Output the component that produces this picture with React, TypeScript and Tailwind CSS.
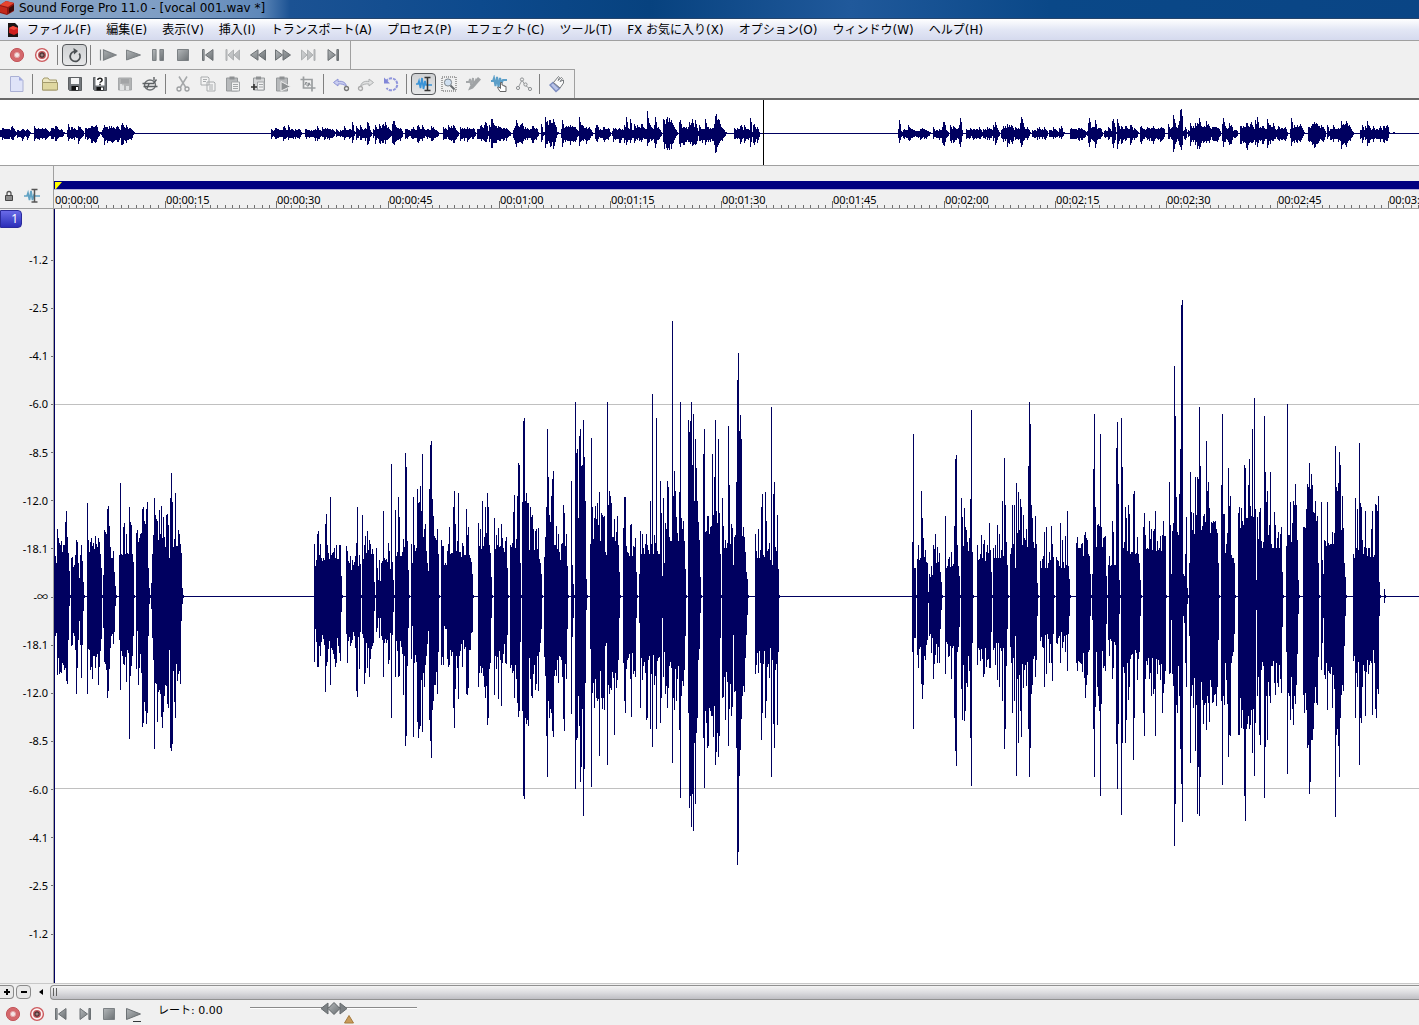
import type { ReactNode } from 'react';

type Phrase = [from: number, to: number, up: number, down: number, peaks: number[]];

// Each phrase: first column, last column, body height above and below zero,
// then its peaks as column, up, down.
const phrases: Phrase[] = [
  [55, 69, 46, 64, [55, 40, 40, 56, 33, 37, 57, 67, 79, 58, 58, 62, 65, 74, 72, 66, 85, 85, 68, 43, 44, 69, 25, 10]],
  [71, 83, 32, 40, [71, 38, 50, 76, 56, 98, 77, 54, 72, 79, 18, 25, 81, 51, 82, 83, 14, 15]],
  [87, 101, 46, 54, [87, 93, 98, 88, 56, 53, 90, 54, 74, 92, 50, 83, 93, 53, 60, 98, 58, 89, 101, 28, 43]],
  [103, 115, 42, 45, [103, 21, 32, 104, 66, 66, 105, 64, 68, 106, 62, 74, 107, 87, 102, 108, 90, 95, 109, 70, 73, 114, 24, 36, 115, 10, 10]],
  [119, 133, 46, 58, [119, 41, 44, 120, 113, 94, 123, 69, 68, 124, 73, 69, 126, 62, 86, 129, 89, 143, 130, 74, 80, 131, 71, 70, 133, 34, 40]],
  [136, 149, 50, 60, [137, 66, 35, 138, 54, 89, 140, 62, 58, 142, 87, 131, 143, 89, 127, 144, 75, 106, 145, 72, 115, 146, 87, 128, 147, 94, 117, 148, 28, 40, 149, 8, 8]],
  [151, 182, 54, 88, [151, 13, 13, 152, 42, 42, 153, 61, 64, 154, 98, 153, 155, 81, 87, 156, 77, 88, 157, 75, 126, 159, 86, 94, 161, 90, 121, 162, 58, 132, 163, 79, 116, 166, 81, 90, 167, 82, 108, 169, 38, 54, 170, 98, 152, 171, 123, 155, 172, 94, 148, 175, 103, 122, 176, 50, 68, 178, 66, 78, 179, 62, 75, 181, 43, 25, 182, 8, 8]],
  [314, 341, 39, 46, [314, 52, 66, 315, 30, 33, 317, 62, 71, 318, 65, 71, 325, 72, 96, 326, 82, 70, 330, 99, 89, 335, 38, 71, 339, 51, 57, 341, 20, 16]],
  [346, 360, 32, 38, [346, 50, 38, 347, 45, 67, 351, 26, 47, 356, 53, 95, 357, 89, 101, 359, 41, 73, 360, 32, 36]],
  [362, 374, 40, 46, [362, 81, 38, 364, 51, 88, 365, 60, 77, 367, 65, 72, 369, 56, 81, 372, 47, 50, 374, 14, 15]],
  [376, 393, 30, 35, [376, 48, 36, 378, 16, 22, 380, 15, 22, 383, 85, 81, 388, 53, 68, 389, 45, 64, 391, 132, 122, 392, 34, 39, 393, 16, 16]],
  [395, 408, 44, 52, [395, 86, 81, 398, 99, 81, 399, 79, 80, 403, 57, 99, 405, 143, 150, 406, 129, 140, 407, 55, 70, 408, 26, 32]],
  [411, 438, 50, 68, [411, 52, 63, 412, 33, 30, 413, 99, 141, 417, 107, 126, 418, 93, 142, 419, 94, 133, 420, 110, 130, 421, 85, 84, 422, 142, 136, 425, 72, 69, 427, 33, 48, 428, 25, 35, 429, 107, 124, 430, 151, 145, 431, 155, 162, 432, 97, 114, 433, 80, 105, 437, 67, 98, 438, 42, 56]],
  [441, 472, 38, 48, [441, 50, 62, 442, 45, 55, 444, 28, 27, 445, 30, 30, 446, 28, 30, 449, 62, 62, 453, 80, 101, 454, 95, 119, 455, 65, 84, 458, 93, 93, 462, 48, 64, 463, 45, 40, 466, 78, 88, 467, 55, 89, 468, 62, 83, 471, 31, 33, 472, 20, 32]],
  [478, 491, 42, 62, [478, 66, 82, 480, 60, 63, 482, 86, 65, 485, 80, 92, 487, 93, 116, 488, 80, 110, 489, 46, 66, 491, 17, 20]],
  [494, 507, 40, 46, [494, 70, 89, 496, 55, 66, 498, 61, 93, 501, 65, 99, 502, 52, 60, 507, 25, 35]],
  [510, 520, 48, 68, [510, 46, 65, 513, 76, 68, 514, 91, 92, 517, 90, 96, 518, 120, 109, 519, 118, 104, 520, 30, 41]],
  [522, 541, 46, 62, [522, 85, 104, 523, 158, 180, 524, 160, 183, 525, 86, 110, 526, 93, 115, 527, 84, 112, 528, 84, 117, 530, 80, 75, 531, 71, 90, 532, 73, 92, 533, 60, 70, 539, 33, 50, 540, 30, 42, 541, 20, 30]],
  [544, 567, 46, 64, [544, 35, 55, 546, 80, 126, 547, 150, 163, 548, 107, 95, 549, 73, 110, 550, 67, 102, 551, 90, 105, 552, 105, 122, 553, 113, 127, 556, 63, 72, 559, 40, 54, 560, 32, 55, 561, 47, 58, 563, 82, 111, 564, 75, 122, 567, 27, 30]],
  [571, 573, 12, 20, [571, 104, 106, 572, 28, 37]],
  [575, 586, 75, 95, [575, 175, 174, 576, 129, 130, 577, 132, 128, 578, 70, 90, 579, 144, 117, 580, 150, 168, 581, 117, 154, 582, 118, 102, 583, 159, 198, 584, 125, 156, 585, 86, 78, 586, 15, 13]],
  [590, 619, 55, 74, [590, 47, 48, 591, 142, 172, 592, 80, 87, 595, 81, 75, 597, 84, 95, 599, 94, 144, 601, 75, 92, 602, 73, 102, 605, 40, 45, 606, 37, 42, 607, 175, 152, 608, 82, 80, 609, 95, 88, 610, 90, 83, 611, 84, 85, 614, 69, 125, 617, 72, 76, 618, 46, 58, 619, 22, 20]],
  [623, 636, 40, 58, [623, 61, 60, 624, 89, 95, 625, 89, 105, 630, 64, 75, 631, 65, 109, 636, 22, 20]],
  [639, 661, 42, 58, [639, 20, 24, 640, 59, 101, 646, 56, 112, 647, 46, 110, 650, 86, 120, 652, 182, 136, 656, 160, 120, 660, 104, 114, 661, 75, 92]],
  [662, 685, 55, 68, [662, 18, 20, 663, 88, 73, 664, 30, 50, 667, 104, 101, 668, 98, 83, 672, 248, 150, 673, 90, 92, 674, 113, 103, 675, 95, 66, 679, 94, 121, 680, 175, 182, 681, 70, 90, 682, 60, 77, 685, 24, 36]],
  [688, 700, 80, 120, [688, 159, 105, 689, 148, 191, 690, 158, 180, 691, 175, 208, 692, 118, 178, 693, 164, 212, 694, 86, 132, 695, 141, 187, 696, 115, 123, 697, 86, 110, 698, 67, 58, 699, 50, 48, 700, 17, 15]],
  [703, 720, 60, 103, [703, 128, 128, 704, 150, 173, 708, 72, 135, 712, 128, 108, 714, 107, 99, 715, 159, 152, 718, 141, 145, 720, 38, 38]],
  [722, 747, 48, 72, [722, 88, 92, 725, 50, 112, 728, 153, 135, 729, 100, 102, 731, 65, 108, 733, 28, 35, 736, 103, 137, 737, 195, 242, 738, 219, 231, 739, 149, 162, 740, 163, 139, 741, 141, 111, 742, 54, 90, 743, 62, 81, 745, 40, 56, 746, 22, 35, 747, 15, 17]],
  [755, 778, 38, 55, [755, 56, 70, 758, 60, 69, 761, 80, 130, 762, 92, 105, 765, 94, 110, 766, 68, 95, 770, 32, 47, 771, 170, 163, 772, 28, 58, 773, 92, 115, 774, 103, 137, 777, 73, 116, 778, 24, 50]],
  [912, 915, 28, 40, [912, 49, 50, 913, 146, 120, 914, 25, 38]],
  [917, 928, 34, 48, [918, 46, 65, 921, 95, 79, 922, 70, 93, 923, 52, 80, 927, 30, 40, 928, 4, 6]],
  [929, 932, 14, 28, [929, 20, 36, 931, 27, 51]],
  [933, 941, 32, 45, [933, 46, 75, 935, 56, 53, 937, 44, 60, 939, 39, 60, 940, 22, 30, 941, 13, 13]],
  [945, 959, 28, 44, [945, 72, 70, 951, 40, 75, 954, 63, 110, 955, 123, 140, 956, 127, 153, 957, 46, 50, 959, 18, 28]],
  [961, 972, 45, 58, [961, 88, 84, 962, 71, 112, 964, 79, 113, 965, 62, 104, 967, 49, 82, 970, 87, 128, 971, 168, 171, 972, 40, 42]],
  [977, 991, 33, 48, [977, 46, 62, 981, 55, 48, 983, 47, 73, 984, 50, 70, 987, 46, 58, 989, 66, 65, 991, 22, 32]],
  [993, 1007, 38, 48, [993, 43, 49, 997, 64, 76, 999, 56, 82, 1002, 86, 95, 1004, 124, 138, 1005, 82, 120, 1007, 28, 30]],
  [1010, 1037, 48, 58, [1010, 38, 46, 1012, 82, 105, 1014, 82, 95, 1015, 25, 36, 1016, 102, 162, 1018, 94, 132, 1020, 87, 104, 1021, 80, 127, 1023, 73, 83, 1028, 117, 120, 1029, 175, 163, 1030, 155, 137, 1031, 82, 88, 1032, 70, 80, 1035, 72, 73, 1037, 12, 18]],
  [1040, 1053, 28, 36, [1044, 58, 82, 1046, 62, 70, 1049, 40, 60, 1051, 63, 60, 1052, 47, 77, 1053, 35, 34]],
  [1056, 1069, 28, 35, [1060, 66, 60, 1062, 50, 47, 1065, 54, 50, 1067, 77, 68, 1069, 15, 18]],
  [1076, 1090, 40, 52, [1076, 48, 60, 1080, 43, 60, 1084, 55, 74, 1085, 58, 92, 1086, 52, 80, 1090, 20, 18]],
  [1092, 1106, 48, 56, [1092, 20, 22, 1093, 114, 120, 1094, 164, 163, 1095, 80, 100, 1098, 65, 90, 1099, 63, 104, 1100, 146, 180, 1101, 62, 97, 1103, 52, 65, 1106, 18, 25]],
  [1108, 1119, 30, 44, [1112, 68, 75, 1113, 58, 65, 1116, 133, 133, 1117, 157, 174, 1118, 101, 115, 1119, 14, 16]],
  [1121, 1140, 42, 56, [1121, 160, 197, 1122, 116, 132, 1125, 80, 132, 1126, 70, 112, 1128, 82, 94, 1129, 74, 82, 1133, 92, 148, 1134, 95, 110, 1139, 30, 50, 1140, 14, 18]],
  [1143, 1165, 45, 62, [1143, 62, 105, 1144, 75, 126, 1149, 68, 75, 1151, 60, 90, 1155, 77, 126, 1162, 55, 105, 1163, 68, 87, 1165, 54, 68]],
  [1169, 1171, 50, 55, [1169, 103, 70, 1170, 64, 69, 1171, 20, 22]],
  [1172, 1183, 58, 66, [1174, 207, 225, 1175, 162, 187, 1176, 89, 98, 1177, 58, 105, 1179, 92, 90, 1180, 132, 138, 1181, 262, 169, 1182, 267, 204, 1183, 20, 18]],
  [1184, 1187, 20, 26, [1185, 38, 60, 1186, 71, 82, 1187, 7, 7]],
  [1189, 1218, 62, 82, [1189, 30, 36, 1190, 112, 150, 1191, 76, 90, 1195, 107, 140, 1197, 107, 196, 1198, 105, 154, 1199, 170, 198, 1200, 117, 163, 1203, 72, 115, 1206, 140, 121, 1207, 95, 90, 1208, 103, 96, 1211, 67, 82, 1216, 60, 99, 1218, 30, 40]],
  [1221, 1234, 38, 56, [1221, 100, 95, 1222, 164, 170, 1223, 74, 90, 1224, 74, 98, 1227, 57, 97, 1228, 115, 145, 1229, 81, 125, 1230, 90, 126, 1234, 30, 34]],
  [1238, 1255, 64, 88, [1238, 75, 125, 1239, 80, 125, 1243, 64, 120, 1244, 118, 180, 1245, 115, 203, 1246, 70, 120, 1247, 70, 115, 1248, 100, 108, 1249, 123, 120, 1252, 150, 141, 1254, 178, 162, 1255, 78, 114]],
  [1256, 1282, 48, 62, [1256, 14, 13, 1257, 71, 90, 1259, 76, 125, 1260, 79, 134, 1264, 162, 182, 1265, 112, 136, 1266, 85, 90, 1267, 95, 130, 1270, 112, 96, 1274, 76, 78, 1277, 52, 78, 1282, 22, 28]],
  [1286, 1298, 50, 76, [1286, 45, 50, 1287, 173, 160, 1290, 85, 112, 1293, 86, 116, 1294, 82, 90, 1295, 101, 97, 1296, 82, 80, 1297, 50, 52, 1298, 14, 16]],
  [1303, 1318, 62, 80, [1304, 62, 105, 1307, 101, 137, 1308, 98, 134, 1309, 120, 178, 1310, 96, 168, 1311, 110, 130, 1312, 100, 130, 1313, 76, 120, 1315, 86, 82, 1318, 30, 55]],
  [1321, 1345, 50, 68, [1321, 85, 67, 1322, 32, 42, 1323, 20, 20, 1327, 85, 103, 1332, 58, 101, 1335, 135, 199, 1336, 98, 125, 1337, 95, 120, 1338, 102, 135, 1339, 130, 163, 1340, 118, 110, 1342, 90, 80, 1344, 30, 45, 1345, 17, 18]],
  [1353, 1379, 38, 56, [1355, 88, 110, 1357, 78, 82, 1359, 138, 152, 1360, 84, 110, 1361, 80, 114, 1365, 77, 108, 1371, 60, 60, 1372, 77, 107, 1375, 83, 102, 1376, 82, 110, 1377, 77, 84, 1378, 90, 88, 1379, 13, 18]],
  [1384, 1384, 5, 5, []],
];

const GUTTER = 54;
const PX_PER_15S = 111.2;
const LAST_LABEL = 180;

// The take gets louder from this column on.
const LOUD_FROM = 441;
const LOUD_GAIN = 1.11;

function buildColumns() {
  const cols: [number, number, number][] = [];
  let seed = 7;
  const rnd = () => {
    seed = (seed * 16807) % 2147483647;
    return seed / 2147483647;
  };
  for (const [from, to, up, down, peaks] of phrases) {
    const gain = from >= LOUD_FROM ? LOUD_GAIN : 1;
    for (let x = from; x <= to; x++) {
      const r = rnd();
      const wobble = gain * (0.9 + 0.45 * r * r);
      cols.push([x, Math.round(up * wobble), Math.round(down * (wobble + 0.05 + 0.2 * (rnd() - 0.5)))]);
    }
    for (let i = 0; i < peaks.length; i += 3) {
      cols[cols.length - 1 - (to - peaks[i])] = [
        peaks[i],
        Math.round(peaks[i + 1] * gain),
        Math.round(peaks[i + 2] * gain),
      ];
    }
    cols.push([to + 1, 1, 2]);
  }
  return cols;
}

const columns = buildColumns();

const wavePath = columns
  .map(([x, up, down]) => `M${x - GUTTER} ${-up}h1v${up + down}h-1z`)
  .join('');

const overviewPath = columns
  .map(([x, up, down]) => {
    const left = Math.round((x - GUTTER) * 1.048) - 1;
    const top = Math.round(up * 0.08);
    const bottom = Math.round(down * 0.07) + 1;
    return `M${left} ${-top}h1v${top + bottom}h-1zM${left + 1} ${-Math.round(top * 0.7)}h1v${Math.round((top + bottom) * 0.7)}h-1z`;
  })
  .join('');

const menus = [
  'ファイル(F)', '編集(E)', '表示(V)', '挿入(I)', 'トランスポート(A)', 'プロセス(P)',
  'エフェクト(C)', 'ツール(T)', 'FX お気に入り(X)', 'オプション(O)', 'ウィンドウ(W)', 'ヘルプ(H)',
];

const levels = [
  '-1.2', '-2.5', '-4.1', '-6.0', '-8.5', '-12.0', '-18.1', '-∞',
  '-18.1', '-12.0', '-8.5', '-6.0', '-4.1', '-2.5', '-1.2',
];

const timeLabel = (seconds: number) =>
  `00:${String(Math.floor(seconds / 60)).padStart(2, '0')}:${String(seconds % 60).padStart(2, '0')}`;

function Glyph({ children, faded }: { children: ReactNode; faded?: boolean }) {
  return (
    <svg width="18" height="18" viewBox="0 0 18 18" fill="none" opacity={faded ? 0.5 : 1} aria-hidden="true">
      {children}
    </svg>
  );
}

const steel = 'url(#steel)';

const icons: Record<string, ReactNode> = {
  record: (
    <>
      <circle cx="9" cy="9" r="6.6" fill="#d4686c" stroke="#c4575c" />
      <circle cx="9" cy="9" r="2.6" fill="#f3e4e4" stroke="#e3a5a7" />
    </>
  ),
  arm: (
    <>
      <circle cx="9" cy="9" r="6.4" fill="#fbf3f3" stroke="#cc5a5e" strokeWidth="1.4" />
      <circle cx="9" cy="9" r="3.3" fill="#4b3032" stroke="#c4575c" strokeWidth="1.3" />
      <circle cx="9" cy="9" r="1.5" fill="#9a7f80" />
    </>
  ),
  loop: (
    <>
      <path d="M13.2 7.5A5 5 0 1 1 8.5 5.5" stroke="#4a4f52" strokeWidth="1.7" />
      <path d="M7.5 2 12 5l-4 3.5z" fill="#4a4f52" />
    </>
  ),
  playAll: <path d="M1.5 3.5v11M4.5 4v10L17 9z" fill={steel} stroke="#7c8184" strokeWidth="1.2" />,
  play: <path d="M2.5 4v10L16.5 9z" fill={steel} stroke="#7c8184" />,
  pause: <path d="M3.5 3.5h3.6v11H3.5zM10.9 3.5h3.6v11h-3.6z" fill={steel} stroke="#7c8184" />,
  stop: <path d="M3.5 3.5h11v11h-11z" fill={steel} stroke="#7c8184" />,
  toStart: <path d="M3.5 3.5h1.6v11H3.5zM14 3.5v11L6.5 9z" fill={steel} stroke="#6c7174" />,
  prev: <path d="M2 3.5h1v11H2zM9.5 4v10L4 9zM15.5 4v10L10 9z" fill={steel} stroke="#6c7174" />,
  rewind: <path d="M9 3.8v10.4L1.5 9zM16.5 3.8v10.4L9.5 9z" fill={steel} stroke="#6c7174" />,
  forward: <path d="M1.5 3.8v10.4L8.5 9zM9 3.8v10.4L16.5 9z" fill={steel} stroke="#6c7174" />,
  next: <path d="M2.5 4v10L8 9zM8.5 4v10L14 9zM15 3.5h1v11h-1z" fill={steel} stroke="#6c7174" />,
  toEnd: <path d="M4 3.5v11L11.5 9zM12.9 3.5h1.6v11h-1.6z" fill={steel} stroke="#6c7174" />,
  playCursor: (
    <>
      <path d="M2.5 3.5v11L16.5 9z" fill={steel} stroke="#6c7174" />
      <path d="M9 16.5h8" stroke="#33383b" />
    </>
  ),
  newFile: (
    <>
      <path d="M2.5 1.5h8.5l4 4V16.5H2.5z" fill="#dfe3f8" stroke="#aab0d4" />
      <path d="M11 1.5v4h4z" fill="#9fa7dd" />
    </>
  ),
  open: (
    <>
      <path d="M1.5 15V5l1.5-2h4l1.5 2h7v10z" fill="#ece6c0" stroke="#a39a6c" />
      <path d="M1.5 7.5h15V15h-15z" fill="#dfd7a0" stroke="#a39a6c" />
    </>
  ),
  save: (
    <>
      <path d="M2.5 2.5h13v13h-12l-1-1z" fill="#73777b" stroke="#5c5f62" />
      <path d="M5 3h8v6H5z" fill="#f4f4f4" />
      <path d="M5.5 11h7v4.5h-7z" fill="#111" />
      <path d="M10 12h2v3h-2z" fill="#fff" />
    </>
  ),
  saveAs: (
    <>
      <path d="M2.5 2.5h13v13h-12l-1-1z" fill="#73777b" stroke="#5c5f62" />
      <path d="M4.5 2h9v8.5h-9z" fill="#fff" />
      <path d="M6.8 5c0-2.3 4.3-2.3 4.3.2 0 1.4-2.1 1.3-2.1 2.6M9 8.8v1.4" stroke="#222" strokeWidth="1.5" />
      <path d="M5.5 12h7v3.5h-7z" fill="#111" />
      <path d="M10 12.5h2v2.5h-2z" fill="#fff" />
    </>
  ),
  saveAll: (
    <>
      <path d="M2.5 3h13v12h-13z" fill="#b2b4b5" stroke="#a6a8aa" />
      <path d="M5 4h8v4.5H5z" fill="#a2a4a6" />
      <path d="M4 9h2l1 2 1-2v6H4zM10 11h3v4h-3z" fill="#dfe1e2" />
    </>
  ),
  publish: (
    <>
      <ellipse cx="9" cy="10" rx="5.5" ry="5" stroke="#6c7073" strokeWidth="1.4" />
      <path d="M1.5 8.5h11l3-4M2.5 11.5h14M6 13.5 8 9M13 5.5V2" stroke="#5c6063" strokeWidth="1.4" />
    </>
  ),
  cut: (
    <>
      <path d="M5 1.5l6.5 10.5M13 1.5L6.5 12" stroke="#a5a8aa" strokeWidth="1.5" />
      <circle cx="5" cy="14" r="2" stroke="#9b9ea0" strokeWidth="1.3" />
      <circle cx="13" cy="14" r="2" stroke="#9b9ea0" strokeWidth="1.3" />
    </>
  ),
  copy: (
    <path d="M2 2h7l1 1v7H2zM8 7h7l1 1v8H8zM4 4.5h4M4 6.5h3M10 10h4M10 12h4M10 14h4" fill="#f3f3f3" stroke="#a9acae" />
  ),
  paste: (
    <>
      <path d="M2.5 3h11v13h-11z" fill="#b7b9bb" stroke="#96999b" />
      <path d="M5.5 1.5h5v3h-5z" fill="#8e9193" />
      <path d="M7.5 7h8v9h-8zM9 9.5h5M9 11.5h5M9 13.5h5" fill="#f1f1f1" stroke="#a3a6a8" />
    </>
  ),
  mix: (
    <>
      <path d="M4.5 3h11v12h-11z" fill="#d5d6d7" stroke="#96999b" />
      <path d="M7 1.5h5v3H7z" fill="#8e9193" />
      <path d="M8.5 7h6.5v8H8.5zM10 9.5h4M10 12h4" fill="#f1f1f1" stroke="#a3a6a8" />
      <path d="M5 9v6M2 12h6" stroke="#333" strokeWidth="1.6" />
    </>
  ),
  pasteNew: (
    <>
      <path d="M2.5 3h11v13h-11z" fill="#b7b9bb" stroke="#96999b" />
      <path d="M5.5 1.5h5v3h-5z" fill="#8e9193" />
      <path d="M7 6.5v9.5l9.5-4.5z" fill="#8e9193" stroke="#eee" />
    </>
  ),
  crop: (
    <>
      <path d="M4.5 1.5v11.5h12M1.5 4.5h11.5v12" stroke="#9b9ea0" strokeWidth="1.7" />
      <path d="M5.5 9.500h1V7.500h1.500v3.500h1.500V8h1v2H12" stroke="#8e9295" />
    </>
  ),
  undo: (
    <>
      <path d="M1.5 7.5 6 4v2.5c5-1 8 1.5 8.5 5-2-2-5-3-8.5-2.5V11z" fill="#c9cdf0" stroke="#8d94d6" />
      <circle cx="14.5" cy="13.5" r="2" stroke="#777" strokeWidth="1.3" />
    </>
  ),
  redo: (
    <>
      <path d="M16.5 7.5 12 4v2.5c-5-1-8 1.5-8.5 5 2-2 5-3 8.5-2.5V11z" fill="#dfe0e0" stroke="#aeb0b1" />
      <circle cx="3.5" cy="13.5" r="2" stroke="#aaa" strokeWidth="1.3" />
    </>
  ),
  repeat: (
    <>
      <path d="M4 6.5A6 6 0 1 1 4.5 13" stroke="#8f95dc" strokeWidth="2" strokeDasharray="3 1" />
      <path d="M2 2.5v6h6z" fill="#8187d8" />
    </>
  ),
  edit: (
    <>
      <path d="M1 9h2l1-3 1.5 7L7 3l1.5 11L10 6l1 4h6" stroke="#3a94d8" strokeWidth="1.7" />
      <path d="M9.5 2.5h6M12.5 2.5v13M9.5 15.5h6" stroke="#333" strokeWidth="1.5" />
    </>
  ),
  magnify: (
    <>
      <path d="M2 2h14v14H2z" stroke="#555" strokeDasharray="1 1" />
      <circle cx="8" cy="7.5" r="3.6" fill="#cfdff0" stroke="#7d858c" />
      <path d="m10.5 10.5 4 4" stroke="#666a6d" strokeWidth="2" />
    </>
  ),
  pencil: (
    <>
      <path d="M1 7h3l1-3 1 6 2-7 1 8 2-6 1 2" stroke="#a5a8aa" strokeWidth="1.8" />
      <path d="M3 15.5 5 11l8-9 3 2.5-8 9z" fill="#a0a3a5" />
    </>
  ),
  event: (
    <>
      <path d="M1 6h2l1-3 1.5 8L7 2l1.5 10L10 3l1.5 5L13 5h4" stroke="#5c9fc8" strokeWidth="2" />
      <path d="M10 16.5 7.5 12.5l1.5-.5 1.5 1.5V7.5H12V10h1.2v.7h1.4v.7H16v5.1z" fill="#fff" stroke="#666" />
    </>
  ),
  envelope: (
    <>
      <path d="M3 13 7 5l3 5 5 4" stroke="#9a9d9f" />
      <circle cx="3" cy="13" r="1.6" fill="#eee" stroke="#8e9193" />
      <circle cx="7" cy="4.5" r="1.6" fill="#eee" stroke="#8e9193" />
      <circle cx="10.5" cy="9.5" r="1.6" fill="#eee" stroke="#8e9193" />
      <circle cx="15" cy="14" r="1.6" fill="#eee" stroke="#8e9193" />
    </>
  ),
  script: (
    <>
      <path d="m2 10 3-2.5 6.5 6-3.5 3z" fill="#b9c4e8" stroke="#7d8dc0" strokeWidth="1.4" />
      <path d="M5.5 7.5l5-6 1 1-1.5 3 3.5-3 1 1-2.5 3L15.5 5v3L12 13z" fill="#fafafa" stroke="#777b7e" />
    </>
  ),
};

const fadedIcons = ['prev', 'next'];

function ToolButton({ name, pressed, wide = true }: { name: string; pressed?: boolean; wide?: boolean }) {
  return (
    <button
      type="button"
      aria-label={name}
      aria-pressed={pressed}
      className={`flex h-[22px] shrink-0 items-center justify-center ${wide ? 'w-[25px]' : 'w-6'} ${
        pressed ? 'rounded border border-[#55585b] bg-linear-to-b from-[#cfd1d3] to-[#e6e7e8]' : ''
      }`}
    >
      <Glyph faded={fadedIcons.includes(name)}>{icons[name]}</Glyph>
    </button>
  );
}

function Toolbar({ groups, active }: { groups: string[][]; active: string }) {
  return (
    <div role="toolbar" className="flex h-full w-fit items-center border-r border-[#a0a0a0] pr-[5px] pl-1">
      {groups.map((group, idx) => (
        <div key={group[0]} className="flex items-center">
          {idx > 0 && <span className="mr-1 ml-[3px] h-5 w-px bg-[#808080]" aria-hidden="true" />}
          {group.map((name) => (
            <ToolButton key={name} name={name} pressed={name === active} />
          ))}
        </div>
      ))}
    </div>
  );
}

function Ruler() {
  const seconds = Array.from({ length: 400 }, (_, i) => i);
  return (
    <svg className="h-[18px] w-full" aria-label="timeline">
      {seconds.map((s) => {
        const x = Math.round((s * PX_PER_15S) / 15) + 1;
        const major = s % 15 === 0;
        return (
          <g key={s}>
            {s > 0 && <path d={`M${x - 0.5} ${major ? 11 : 15}V18`} stroke="#707070" />}
            {major && s <= LAST_LABEL && (
              <text x={x} y="14" fontSize="11" fill="#000">
                {timeLabel(s)}
              </text>
            )}
          </g>
        );
      })}
    </svg>
  );
}

export default function App() {
  return (
    <div className="flex min-h-screen flex-col overflow-hidden bg-[#f0f0f0] font-['Noto_Sans','Noto_Sans_CJK_JP',sans-serif] text-xs text-black">
      <svg className="absolute h-0 w-0" aria-hidden="true">
        <linearGradient id="steel" x1="0" y1="0" x2="1" y2="1">
          <stop offset="0" stopColor="#b4b8ba" />
          <stop offset="1" stopColor="#6b7073" />
        </linearGradient>
      </svg>

      {/* Title bar */}
      <header className="flex h-[19px] items-start gap-1 overflow-hidden border-b border-[#26456c] bg-[linear-gradient(90deg,#8fa9c8_0px,#7c9cc4_180px,#5f88b9_260px,#1b5293_290px,#0d4a8d_480px,#07427f_650px,#20599b_850px,#0a4888_1050px,#0a4585_100%)]">
        <svg width="15" height="17" viewBox="0 0 15 17" aria-hidden="true">
          <path d="M0 5 6 1l8 2v8l-7 4-7-2z" fill="#8e1712" />
          <path d="M0 5 6 1l8 2-6 4z" fill="#e5452f" />
          <path d="M0 6l7 2v6l-7-2z" fill="#c32a1c" />
          <path d="M9 8l5-3v5l-5 3z" fill="#3a0d0b" />
        </svg>
        <h1 className="font-['DejaVu_Sans',sans-serif] text-xs leading-4">Sound Forge Pro 11.0 - [vocal 001.wav *]</h1>
      </header>

      {/* Menus */}
      <nav className="flex h-[22px] items-center border-b border-[#a0a0a0] bg-linear-to-b from-white via-[#e3e7f5] to-[#d5daee] pl-[7px]">
        <svg width="12" height="16" viewBox="0 0 12 16" aria-hidden="true">
          <path d="M1 1h7l3 3v11H1z" fill="#1b1515" />
          <path d="M2 6l4-2 5 2v5l-4 2-5-2z" fill="#cf1f1f" />
          <path d="M2 6l4-2 5 2-4 2z" fill="#f04a3c" />
        </svg>
        <ul className="flex items-center gap-[15px] pl-[8px] font-['DejaVu_Sans','Noto_Sans_CJK_JP',sans-serif]">
          {menus.map((label) => (
            <li key={label}>
              <button type="button" className="block leading-5 whitespace-nowrap">
                {label}
              </button>
            </li>
          ))}
        </ul>
      </nav>

      <div className="h-7">
        <Toolbar
          active="loop"
          groups={[
            ['record', 'arm'],
            ['loop'],
            ['playAll', 'play', 'pause', 'stop', 'toStart', 'prev', 'rewind', 'forward', 'next', 'toEnd'],
          ]}
        />
      </div>
      <div className="h-[29px] w-fit border-t border-[#a0a0a0]">
        <Toolbar
          active="edit"
          groups={[
            ['newFile'],
            ['open', 'save', 'saveAs', 'saveAll', 'publish'],
            ['cut', 'copy', 'paste', 'mix', 'pasteNew', 'crop'],
            ['undo', 'redo', 'repeat'],
            ['edit', 'magnify', 'pencil', 'event', 'envelope'],
            ['script'],
          ]}
        />
      </div>

      {/* Overview */}
      <div className="h-[68px] border-t-2 border-b border-t-[#696969] border-b-[#a0a0a0] bg-white">
        <svg className="h-full w-full" shapeRendering="crispEdges" aria-label="overview">
          <svg y="50%" overflow="visible">
            <path d="M0 0h4000v1H0z" fill="#000060" />
            <path d={overviewPath} fill="#000060" />
          </svg>
          <path d="M763 0h1v80h-1z" fill="#000" />
        </svg>
      </div>

      {/* Ruler */}
      <div className="flex h-[43px] border-b border-[#a0a0a0]">
        <div className="flex w-[54px] shrink-0 items-end gap-2 border-r border-[#a0a0a0] pb-1 pl-1">
          <svg width="10" height="16" viewBox="0 0 10 16" fill="none" aria-hidden="true">
            <path d="M3 8V5.5a2 2 0 0 1 4 0V8" stroke="#555" strokeWidth="1.3" />
            <path d="M1.5 7.5h7v5h-7z" fill="#8c8c8c" stroke="#444" />
          </svg>
          <svg width="20" height="16" viewBox="0 0 20 16" fill="none" aria-hidden="true">
            <path d="M2 8h3l1-3 1.5 7L9 3l1.5 9L12 7l1 1h5" stroke="#62a3c4" strokeWidth="1.7" />
            <path d="M9.5 1.5h6M12.5 1.5v12.5M9.5 14h6" stroke="#555" strokeWidth="1.5" />
          </svg>
        </div>
        <div className="min-w-0 flex-1">
          <div className="mt-[15px] flex h-[9px] border-b border-[#b4b0dc] bg-[#000080]">
            <svg width="8" height="8" viewBox="0 0 8 8" aria-hidden="true">
              <path d="M1 1h7L2 8H1z" fill="#ffff00" />
            </svg>
          </div>
          <Ruler />
        </div>
      </div>

      {/* Channel */}
      <main className="flex min-h-[760px] flex-1">
        <div className="relative flex w-[54px] shrink-0 border-r border-[#a0a0a0]">
          <button
            type="button"
            className="absolute top-px left-0 h-[18px] w-[22px] rounded-r-sm border border-[#2a2a9c] bg-linear-to-b from-[#6a6ae8] to-[#2c2cb8] pr-[3px] text-right leading-4 text-white"
          >
            1
          </button>
          <ul className="flex flex-1 flex-col pt-[27px] pb-[25px] text-right text-[11px] leading-4">
            {levels.map((level, idx) => (
              <li key={idx} className="flex flex-1 items-center justify-end gap-[3px]">
                {level}
                <span className="h-px w-[2px] bg-[#707070]" aria-hidden="true" />
              </li>
            ))}
          </ul>
        </div>
        <svg
          className="min-w-0 flex-1 self-stretch border-l border-[#000060] bg-white"
          shapeRendering="crispEdges"
          aria-label="waveform"
        >
          <svg x="-1" y="50%" overflow="visible">
            <path d="M0-192h4000v1H0zM0 192h4000v1H0z" fill="#c0c0c0" />
            <path d="M0 0h4000v1H0z" fill="#000060" />
            <path d={wavePath} fill="#000060" />
          </svg>
        </svg>
      </main>

      {/* Zoom and scroll */}
      <div className="flex h-[17px] items-center border-t border-[#c8c8c8]">
        <button type="button" aria-label="zoom in" className="flex h-[14px] w-[14px] items-center justify-center rounded-r-sm border border-l-0 border-[#8a8a8a] bg-[#e8e8e8]">
          <svg width="8" height="8" viewBox="0 0 8 8" aria-hidden="true">
            <path d="M1 3h2V1h2v2h2v2H5v2H3V5H1z" />
          </svg>
        </button>
        <button type="button" aria-label="zoom out" className="ml-[2px] flex h-[14px] w-[15px] items-center justify-center rounded-sm border border-[#8a8a8a] bg-[#e8e8e8]">
          <svg width="8" height="8" viewBox="0 0 8 8" aria-hidden="true">
            <path d="M1 3h6v2H1z" />
          </svg>
        </button>
        <button type="button" aria-label="scroll left" className="flex h-[14px] w-[19px] items-center justify-center">
          <svg width="4" height="6" viewBox="0 0 4 6" aria-hidden="true">
            <path d="M4 0v6L0 3z" />
          </svg>
        </button>
        <div className="flex h-[15px] flex-1 items-center gap-[2px] rounded-l-sm border border-r-0 border-[#909090] bg-linear-to-b from-[#f4f4f4] via-[#dcdcdf] to-[#bfbfc4] pl-[2px]">
          <span className="h-2 w-px bg-[#606060]" />
          <span className="h-2 w-px bg-[#606060]" />
        </div>
      </div>

      {/* Transport */}
      <footer className="flex h-[25px] items-start pl-px">
        <div className="flex pt-[3px]">
          {['record', 'arm', 'toStart', 'toEnd', 'stop', 'playCursor'].map((name) => (
            <ToolButton key={name} name={name} wide={false} />
          ))}
        </div>
        <label
          htmlFor="rate"
          className="w-[105px] pt-[2px] pl-[13px] font-['DejaVu_Sans','Noto_Sans_CJK_JP',sans-serif] text-[11px] leading-[18px]"
        >
          レート: 0.00
        </label>
        <div className="relative h-[25px] w-[168px]">
          <svg width="168" height="25" viewBox="0 0 168 25" aria-hidden="true">
            <path d="M0 7.5h167" stroke="#8a8a8a" />
            <path d="M0 8.5h167" stroke="#fff" />
            <path d="M78 3v11L71 8.5zM90 3v11l7-5.5z" fill="#7c8184" stroke="#666b6e" />
            <path d="M84 2.5 90 8.5 84 14.5 78 8.5z" fill={steel} stroke="#5d6265" />
            <path d="M99 15.5 103.5 23h-9z" fill="#c89b5a" stroke="#a67a3c" />
          </svg>
          <input id="rate" type="range" min="-20" max="20" defaultValue="0" className="absolute inset-0 h-4 w-full opacity-0" />
        </div>
      </footer>
    </div>
  );
}
